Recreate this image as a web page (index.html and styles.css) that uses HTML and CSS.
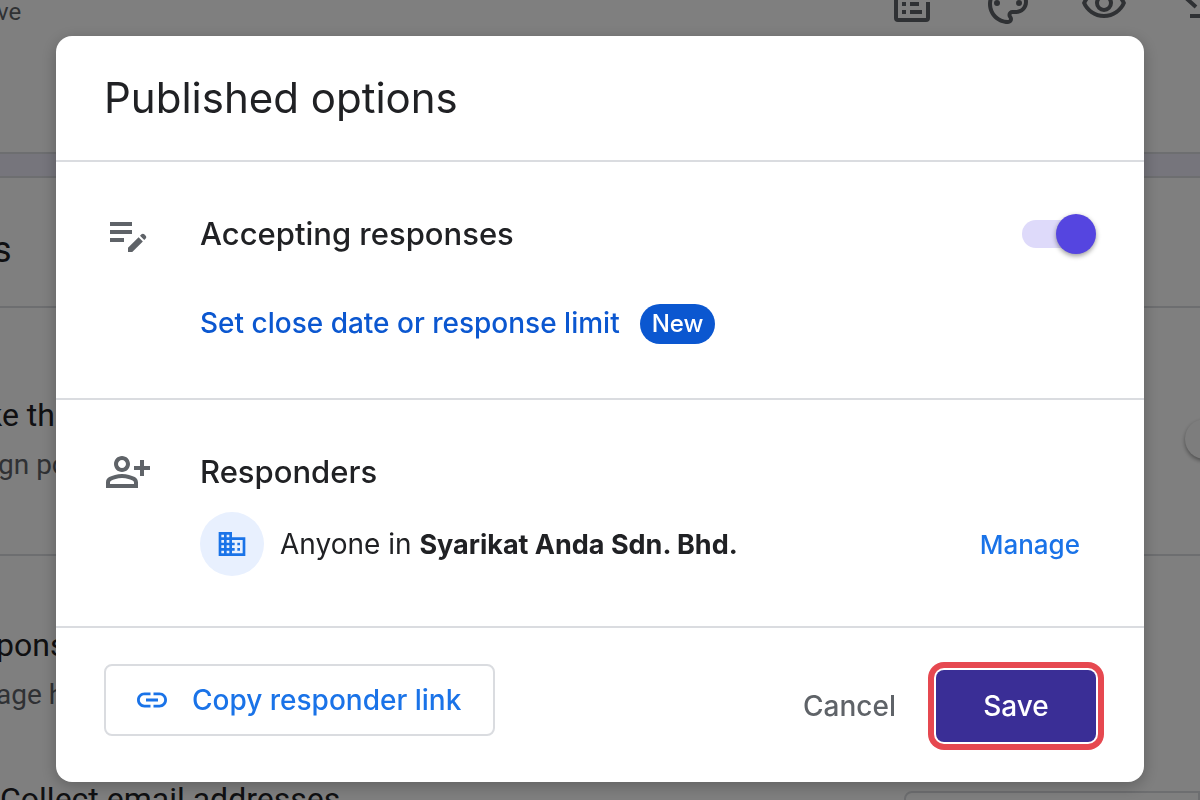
FILE: index.html
```html
<!DOCTYPE html>
<html lang="en">
<head>
    <meta charset="UTF-8">
    <meta name="viewport" content="width=device-width, initial-scale=1.0">
    <title>Published options</title>
    <link rel="stylesheet" href="styles.css">
</head>
<body>
    <div class="page">
        <header class="topbar">
            <span class="save-state">ve</span>
            <div class="tools">
                <svg viewBox="0 0 24 24"><path d="M16 4H5a1 1 0 0 0-1 1v14a1 1 0 0 0 1 1h14a1 1 0 0 0 1-1v-8" fill="none" stroke="currentColor" stroke-width="2"/><path d="M11 11h4.500v2H11zM11 15h6v2h-6zM7 11h2v2H7zM7 15h2v2H7z"/></svg>
                <svg viewBox="0 0 24 24"><path d="M12 22C6.490 22 2 17.510 2 12S6.490 2 12 2s10 4.040 10 9c0 3.310-2.690 6-6 6h-1.770c-.28 0-.5.22-.5.5 0 .12.050.23.130.33.41.47.64 1.060.64 1.670A2.500 2.500 0 0 1 12 22zm0-18c-4.410 0-8 3.590-8 8s3.590 8 8 8c.28 0 .5-.22.5-.5a.54.54 0 0 0-.14-.35c-.41-.46-.63-1.050-.63-1.650a2.500 2.500 0 0 1 2.500-2.500H16c2.210 0 4-1.790 4-4 0-3.860-3.590-7-8-7z"/><circle cx="6.500" cy="11.500" r="1.500"/><circle cx="17.500" cy="11.500" r="1.500"/></svg>
                <svg viewBox="0 0 24 24"><path d="M12 6c3.790 0 7.170 2.130 8.820 5.500C19.170 14.870 15.790 17 12 17s-7.170-2.130-8.820-5.500C4.830 8.130 8.210 6 12 6m0-2C7 4 2.730 7.110 1 11.500 2.730 15.890 7 19 12 19s9.270-3.110 11-7.500C21.270 7.110 17 4 12 4zm0 5a2.500 2.500 0 0 1 0 5 2.500 2.500 0 0 1 0-5m0-2a4.500 4.500 0 0 0 0 9 4.500 4.500 0 0 0 0-9z"/></svg>
                <svg viewBox="0 0 24 24"><path d="M10 5 5 9l5 4.500" fill="none" stroke="currentColor" stroke-width="2"/><path d="M7 17h12v2H7z"/></svg>
            </div>
        </header>
        <div class="band"></div>
        <section class="row row-title"><h2>s</h2></section>
        <section class="row row-quiz">
            <div>
                <h3>ke th</h3>
                <p>gn po</p>
            </div>
            <span class="knob"></span>
        </section>
        <section class="row row-responses">
            <h3>pons</h3>
            <p>age h</p>
            <div class="collect">
                <h3>Collect email addresses</h3>
                <span class="picker"></span>
            </div>
        </section>
    </div>

    <div class="scrim">
        <div class="dialog" role="dialog" aria-modal="true" aria-labelledby="dialog-title">
            <header class="dialog-header">
                <h1 id="dialog-title">Published options</h1>
            </header>

            <section class="option">
                <svg class="option-icon" viewBox="0 0 24 24"><path d="M3 10h11v2H3v-2zm0-2h11V6H3v2zm0 8h7v-2H3v2zm15.010-3.130.710-.710c.39-.39 1.020-.39 1.410 0l.710.710c.39.39.39 1.020 0 1.410l-.710.710-2.120-2.120zm-.710.710-5.300 5.300V21h2.120l5.300-5.300-2.120-2.120z"/></svg>
                <div class="option-body">
                    <div class="option-head">
                        <label class="option-title" for="accepting">Accepting responses</label>
                        <input class="switch" type="checkbox" id="accepting" checked>
                    </div>
                    <div class="limit">
                        <a class="limit-link" href="#">Set close date or response limit</a>
                        <span class="pill">New</span>
                    </div>
                </div>
            </section>

            <section class="option option-responders">
                <svg class="option-icon" viewBox="0 0 24 24"><path d="M20 9V6h-2v3h-3v2h3v3h2v-3h3V9h-3zM9 12c2.210 0 4-1.790 4-4s-1.790-4-4-4-4 1.790-4 4 1.790 4 4 4zm0-6c1.100 0 2 .9 2 2s-.9 2-2 2-2-.9-2-2 .9-2 2-2zm6.390 8.560C13.710 13.700 11.530 13 9 13s-4.710.700-6.390 1.560A2.970 2.970 0 0 0 1 17.220V20h16v-2.780c0-1.120-.61-2.150-1.610-2.660zM15 18H3v-.78c0-.38.2-.72.52-.88C4.710 15.730 6.630 15 9 15s4.290.730 5.480 1.340c.32.16.52.5.52.88V18z"/></svg>
                <div class="option-body">
                    <h2 class="option-title">Responders</h2>
                    <div class="audience">
                        <span class="avatar">
                            <svg viewBox="0 0 24 24"><path d="M12 7V3H2v18h20V7H12zM6 19H4v-2h2v2zm0-4H4v-2h2v2zm0-4H4V9h2v2zm0-4H4V5h2v2zm4 12H8v-2h2v2zm0-4H8v-2h2v2zm0-4H8V9h2v2zm0-4H8V5h2v2zm10 12h-8v-2h2v-2h-2v-2h2v-2h-2V9h8v10zm-2-8h-2v2h2v-2zm0 4h-2v2h2v-2z"/></svg>
                        </span>
                        <p class="audience-name">Anyone in <strong>Syarikat Anda Sdn. Bhd.</strong></p>
                        <button class="manage" type="button">Manage</button>
                    </div>
                </div>
            </section>

            <footer class="dialog-footer">
                <button class="copy" type="button">
                    <svg viewBox="0 0 24 24"><path d="M3.900 12c0-1.710 1.390-3.100 3.100-3.100h4V7H7c-2.760 0-5 2.240-5 5s2.240 5 5 5h4v-1.900H7c-1.710 0-3.100-1.390-3.100-3.100zM8 13h8v-2H8v2zm9-6h-4v1.900h4c1.710 0 3.100 1.390 3.100 3.100s-1.390 3.100-3.100 3.100h-4V17h4c2.760 0 5-2.240 5-5s-2.240-5-5-5z"/></svg>
                    Copy responder link
                </button>
                <div class="actions">
                    <button class="cancel" type="button">Cancel</button>
                    <button class="save" type="button">Save</button>
                </div>
            </footer>
        </div>
    </div>
</body>
</html>
```
FILE: styles.css
```css
* {
    box-sizing: border-box;
}
body {
    margin: 0;
    font-family: "Inter", "Liberation Sans", sans-serif;
    color: #202124;
    background: #fff;
}
h1, h2, h3, p {
    margin: 0;
    font-weight: 400;
}
svg {
    display: block;
    flex: none;
    fill: currentColor;
}
button {
    border: none;
    padding: 0;
    background: none;
    font-family: inherit;
    font-size: 28px;
    font-weight: 500;
    cursor: pointer;
}

/* form editor behind the dialog */
.page {
    height: 100vh;
    overflow: hidden;
    font-family: "Roboto", sans-serif;
}
.topbar {
    display: flex;
    justify-content: space-between;
    height: 152px;
    color: #5f6368;
}
.save-state {
    margin-left: -3px;
    font-size: 24px;
    line-height: 24px;
}
.tools {
    display: flex;
    gap: 48px;
    margin: -20px -24px 0 0;
}
.tools svg {
    width: 48px;
    height: 48px;
}
.band {
    height: 26px;
    background: #ecebf8;
    border-top: 2px solid #dadce0;
    border-bottom: 2px solid #dadce0;
}
.row {
    border-bottom: 2px solid #dadce0;
}
.row h2 {
    font-size: 36px;
    line-height: 40px;
}
.row h3 {
    font-size: 32px;
    line-height: 40px;
}
.row p {
    margin-top: 12px;
    font-size: 28px;
    line-height: 36px;
    color: #5f6368;
}
.row-title {
    height: 130px;
    padding-top: 52px;
    margin-left: -7px;
}
.row-quiz {
    display: flex;
    justify-content: space-between;
    height: 248px;
    padding-top: 87px;
}
.row-quiz > div {
    margin-left: -14px;
}
.row-quiz p {
    margin-left: 12px;
}
.knob {
    width: 40px;
    height: 40px;
    margin: 24px -25px 0 0;
    border-radius: 50%;
    background: #fafafa;
    box-shadow: 0 2px 4px rgba(0, 0, 0, 0.4);
}
.row-responses {
    padding-top: 69px;
}
.row-responses h3,
.row-responses p {
    margin-left: -4px;
}
.collect {
    display: flex;
    justify-content: space-between;
    margin-top: 66px;
}
.collect h3 {
    margin-left: 0;
}
.picker {
    width: 296px;
    height: 96px;
    margin-top: 12px;
    border: 2px solid #dadce0;
    border-radius: 8px 0 0 8px;
}

/* dialog */
.scrim {
    position: fixed;
    inset: 0;
    padding: 36px 56px 18px;
    background: rgba(0, 0, 0, 0.5);
}
.dialog {
    background: #fff;
    border-radius: 16px;
    box-shadow: 0 4px 16px rgba(0, 0, 0, 0.25);
}
.dialog-header {
    padding: 36px 48px;
    border-bottom: 2px solid #dadce0;
}
.dialog-header h1 {
    font-size: 42px;
    line-height: 52px;
}
.option {
    display: flex;
    gap: 48px;
    padding: 48px;
    border-bottom: 2px solid #dadce0;
}
.option-icon {
    width: 48px;
    height: 48px;
    color: #5f6368;
}
.option-body {
    flex: 1;
}
.option-head {
    display: flex;
    align-items: center;
    justify-content: space-between;
}
.option-title {
    font-size: 31px;
    font-weight: 500;
    line-height: 48px;
}
.switch {
    appearance: none;
    position: relative;
    width: 72px;
    height: 28px;
    margin: 0 2px 0 0;
    border-radius: 14px;
    background: #dedafa;
    cursor: pointer;
}
.switch::before {
    content: "";
    position: absolute;
    top: -6px;
    left: -2px;
    width: 40px;
    height: 40px;
    border-radius: 50%;
    background: #fff;
    box-shadow: 0 2px 5px rgba(0, 0, 0, 0.4);
}
.switch:checked::before {
    left: 34px;
    background: #5545e0;
}
.limit {
    display: flex;
    align-items: flex-start;
    gap: 20px;
    margin: 46px 0 6px;
}
.limit-link {
    font-size: 28px;
    font-weight: 500;
    line-height: 38px;
    color: #0b57d0;
    text-decoration: none;
}
.pill {
    padding: 0 12px;
    border-radius: 20px;
    background: #0b57d0;
    color: #fff;
    font-size: 24px;
    font-weight: 500;
    line-height: 40px;
}
.audience {
    display: flex;
    align-items: center;
    gap: 16px;
    margin-top: 16px;
}
.option-responders {
    padding-bottom: 50px;
}
.avatar {
    display: flex;
    align-items: center;
    justify-content: center;
    width: 64px;
    height: 64px;
    border-radius: 50%;
    background: #e8f0fe;
    color: #1a73e8;
}
.avatar svg {
    width: 32px;
    height: 32px;
}
.audience-name {
    flex: 1;
    font-size: 28px;
    line-height: 40px;
}
.audience-name strong {
    font-size: 27px;
}
.manage {
    padding: 0 16px;
    font-size: 26px;
    color: #1a73e8;
}
.dialog-footer {
    display: flex;
    align-items: flex-start;
    justify-content: space-between;
    padding: 36px 48px 40px;
}
.copy {
    display: flex;
    align-items: center;
    gap: 22px;
    height: 72px;
    padding: 0 32px 0 28px;
    border: 2px solid #dadce0;
    border-radius: 8px;
    color: #1a73e8;
}
.copy svg {
    width: 36px;
    height: 36px;
}
.actions {
    display: flex;
    gap: 40px;
    padding-top: 6px;
}
.cancel {
    color: #5f6368;
}
.save {
    width: 160px;
    height: 72px;
    border-radius: 8px;
    background: #3a2e96;
    color: #fff;
    box-shadow: 0 0 0 2px #fff, 0 0 0 8px #e64850;
}
```
